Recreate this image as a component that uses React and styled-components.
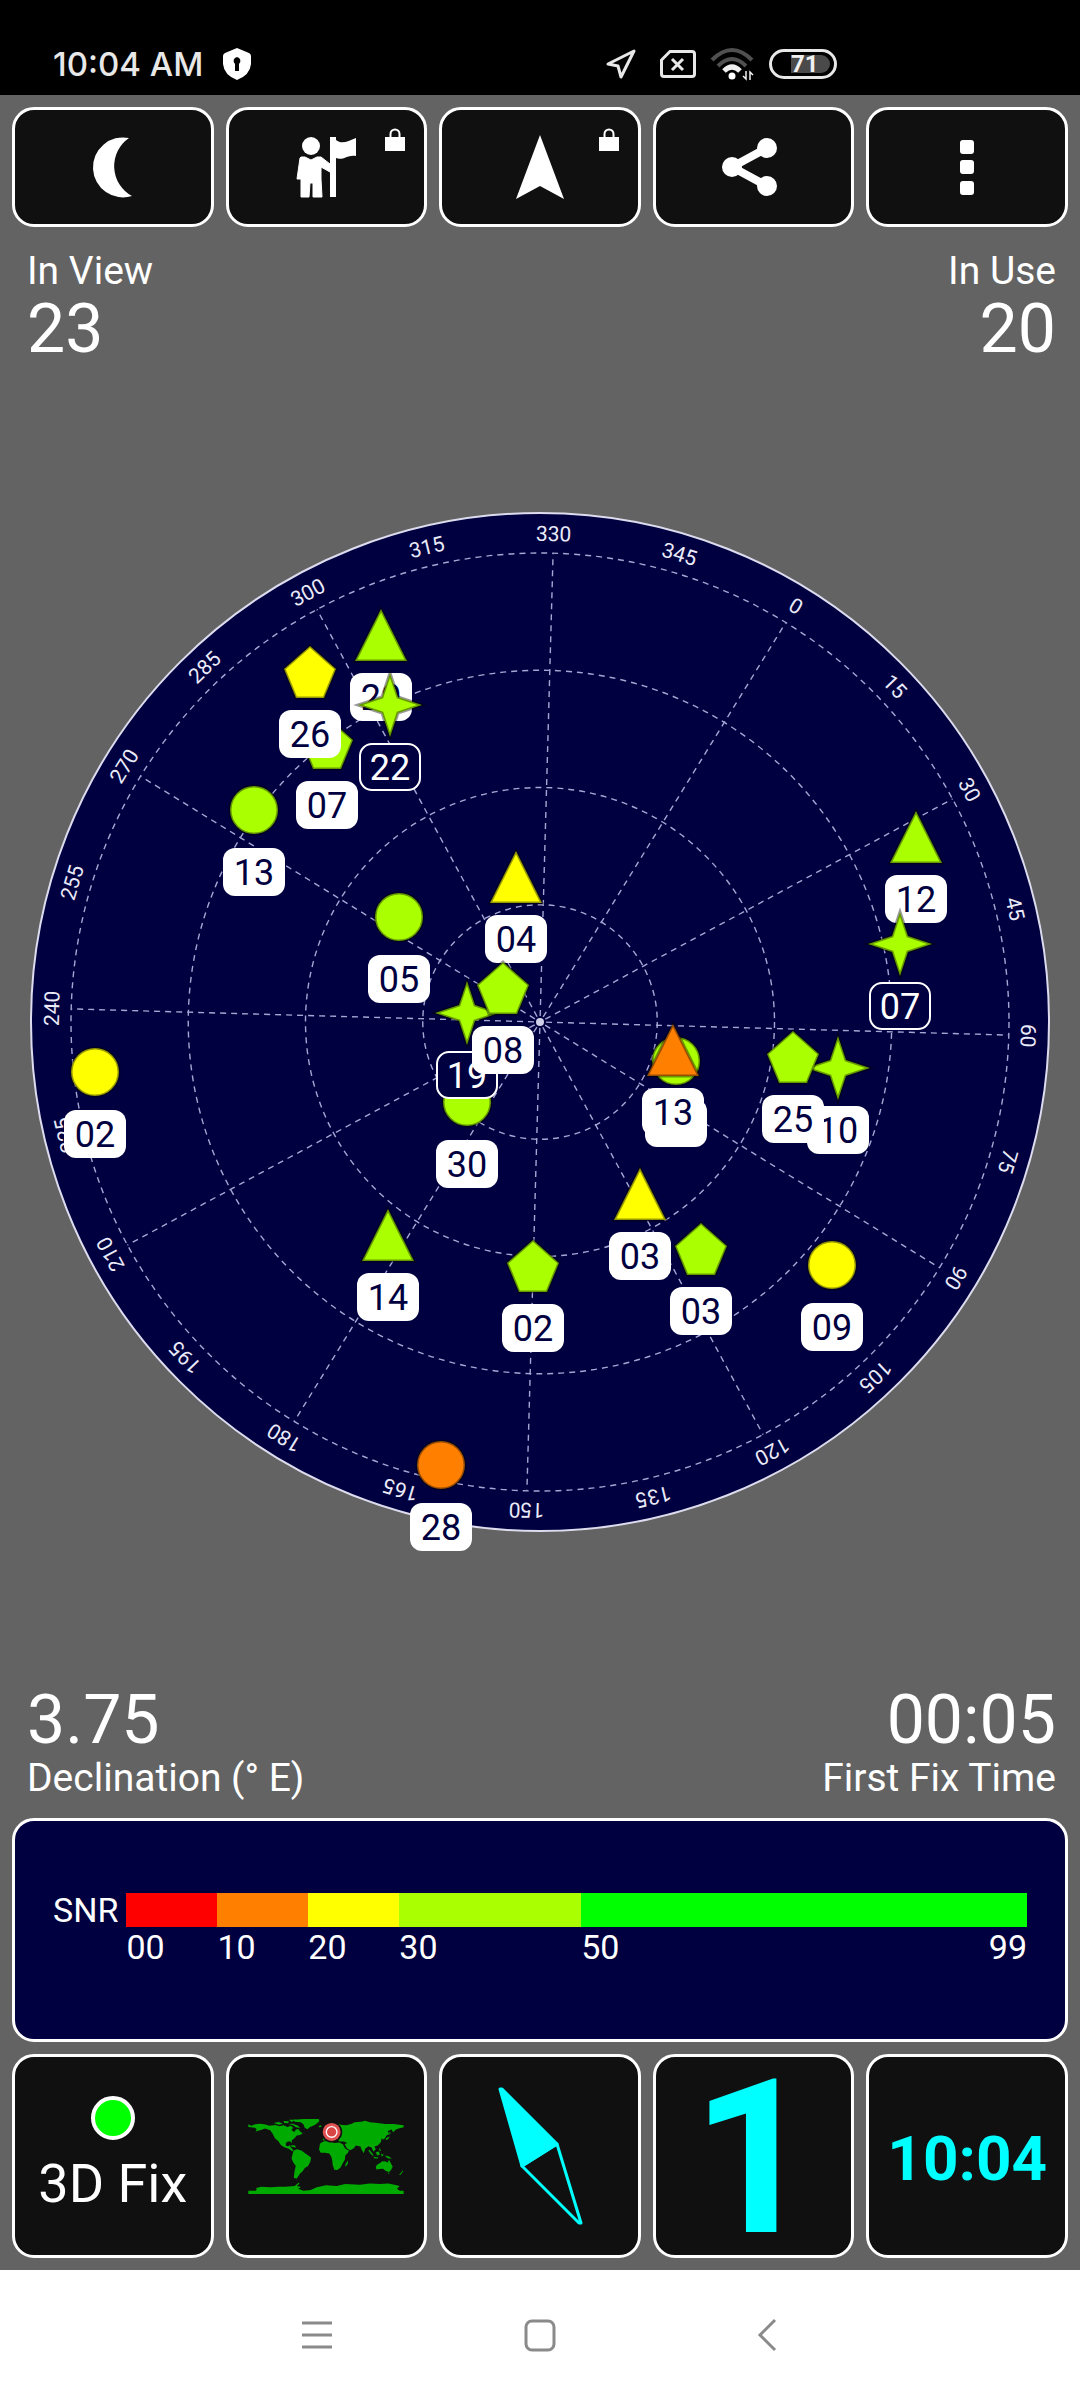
import React from "react";
import styled, { createGlobalStyle } from "styled-components";

const color = {
  page: "#636363",
  tile: "#101010",
  navy: "#000040",
  lime: "#aaff00",
  yellow: "#ffff00",
  orange: "#ff8000",
  red: "#ff0000",
  green: "#00ff00",
  cyan: "#00ffff",
};

const GlobalStyle = createGlobalStyle`
  * { box-sizing: border-box; }
  body {
    margin: 0;
    background: ${color.page};
    color: #fff;
    font-family: Roboto, "Liberation Sans", sans-serif;
  }
  button {
    font: inherit;
    color: inherit;
    margin: 0;
    padding: 0;
    cursor: pointer;
  }
  svg { display: block; overflow: visible; }
`;

const Screen = styled.div`
  display: flex;
  flex-direction: column;
  min-height: 100vh;
`;

const StatusBar = styled.header`
  display: flex;
  align-items: center;
  justify-content: space-between;
  height: 95px;
  padding: 33px 243px 0 53px;
  background: #000;
`;

const StatusGroup = styled.div`
  display: flex;
  align-items: center;
  gap: ${(p) => p.$gap}px;
`;

const Clock = styled.span`
  font-family: Inter, Roboto, sans-serif;
  font-size: 33px;
  line-height: 40px;
  font-weight: 500;
  color: #e8e8e8;
`;

const Battery = styled.div`
  display: flex;
  align-items: center;
  width: 68px;
  height: 30px;
  padding: 0 4px 0 19px;
  border: 3px solid #e8e8e8;
  border-radius: 15px;
`;

const BatteryLevel = styled.span`
  flex: 1;
  height: 18px;
  border-radius: 0 9px 9px 0;
  background: #4a4a4a;
  color: #f0f0f0;
  font-size: 24px;
  line-height: 18px;
  font-weight: 700;
`;

const Main = styled.main`
  flex: 1;
  display: flex;
  flex-direction: column;
  padding: 12px;
`;

const TileRow = styled.div`
  display: grid;
  grid-template-columns: repeat(5, 1fr);
  gap: 12px;
`;

const Tile = styled.button`
  position: relative;
  display: flex;
  flex-direction: column;
  align-items: center;
  justify-content: center;
  gap: 12px;
  height: ${(p) => (p.$tall ? 204 : 120)}px;
  border: 3px solid #fff;
  border-radius: 22px;
  background: ${color.tile};
`;

const LockBadge = styled.span`
  position: absolute;
  top: 18px;
  right: 19px;
`;

const StatRow = styled.section`
  display: flex;
  justify-content: space-between;
  padding: ${(p) => (p.$bottom ? "0 12px 16px 15px" : "20px 12px 0 15px")};
`;

const Stat = styled.div`
  display: flex;
  flex-direction: column;
  text-align: ${(p) => p.$align};
`;

const StatLabel = styled.span`
  font-size: 39px;
  line-height: 48px;
`;

const StatValue = styled.span`
  font-size: 68px;
  line-height: 68px;
`;

const SkyArea = styled.section`
  flex: 1;
  display: flex;
  align-items: center;
  margin: 0 -12px;
  padding-bottom: 6px;
`;

const SkyPlot = styled.svg`
  width: 100%;
  height: auto;
`;

const DegreeText = styled.text`
  font-size: 21px;
  fill: #eaeaf8;
  text-anchor: middle;
`;

const SatText = styled.text`
  font-size: 36px;
  text-anchor: middle;
`;

const Panel = styled.section`
  display: flex;
  align-items: center;
  height: 224px;
  margin-bottom: 12px;
  padding: 0 38px;
  border: 3px solid #fff;
  border-radius: 22px;
  background: ${color.navy};
`;

const Scale = styled.div`
  flex: 1;
  display: grid;
  grid-template-columns: auto 1fr;
  column-gap: 8px;
  font-size: 34px;
`;

const ScaleTitle = styled.span`
  line-height: 34px;
`;

const Bar = styled.div`
  display: flex;
  height: 34px;
`;

const Segment = styled.div`
  flex: ${(p) => p.$span} 0 0;
  background: ${(p) => p.$color};
`;

const Ticks = styled.div`
  grid-column: 2;
  display: flex;
  line-height: 40px;
`;

const Tick = styled.div`
  flex: ${(p) => p.$span} 0 0;
  display: flex;
  justify-content: space-between;
  min-width: 0;
`;

const FixDot = styled.span`
  width: 44px;
  height: 44px;
  border: 4px solid #fff;
  border-radius: 50%;
  background: ${color.green};
`;

const FixText = styled.span`
  font-size: 54px;
  line-height: 64px;
`;

const CyanText = styled.span`
  padding-top: 6px;
  color: ${color.cyan};
  font-weight: 700;
  font-size: ${(p) => p.$size}px;
  line-height: 1;
`;

const NavBar = styled.nav`
  display: flex;
  justify-content: center;
  gap: 124px;
  height: 130px;
  background: #fff;
`;

const NavButton = styled.button`
  display: flex;
  align-items: center;
  justify-content: center;
  width: 100px;
  border: 0;
  background: none;
  color: #8a8a8a;
`;

const ROTATION = 31.6;
const RING = 117.25;

// x and y are measured from the zenith; later entries are painted on top.
const satellites = [
  { id: "20", shape: "triangle", c: color.lime, x: -159, y: -387 },
  { id: "07", shape: "pentagon", c: color.lime, x: -213, y: -279 },
  { id: "26", shape: "pentagon", c: color.yellow, x: -230, y: -350 },
  { id: "22", shape: "star", c: color.lime, x: -150, y: -317, outline: true },
  { id: "13", shape: "circle", c: color.lime, x: -286, y: -212 },
  { id: "05", shape: "circle", c: color.lime, x: -141, y: -105 },
  { id: "04", shape: "triangle", c: color.yellow, x: -24, y: -145 },
  { id: "30", shape: "circle", c: color.lime, x: -73, y: 80 },
  { id: "19", shape: "star", c: color.lime, x: -73, y: -9, outline: true },
  { id: "08", shape: "pentagon", c: color.lime, x: -37, y: -34 },
  { id: "02", shape: "circle", c: color.yellow, x: -445, y: 50 },
  { id: "14", shape: "triangle", c: color.lime, x: -152, y: 213 },
  { id: "02", shape: "pentagon", c: color.lime, x: -7, y: 244 },
  { id: "28", shape: "circle", c: color.orange, x: -99, y: 443 },
  { id: "", shape: "circle", c: color.lime, x: 136, y: 39 },
  { id: "13", shape: "triangle", c: color.orange, x: 133, y: 28 },
  { id: "10", shape: "star", c: color.lime, x: 298, y: 46 },
  { id: "25", shape: "pentagon", c: color.lime, x: 253, y: 35 },
  { id: "03", shape: "triangle", c: color.yellow, x: 100, y: 172 },
  { id: "03", shape: "pentagon", c: color.lime, x: 161, y: 227 },
  { id: "09", shape: "circle", c: color.yellow, x: 292, y: 243 },
  { id: "12", shape: "triangle", c: color.lime, x: 376, y: -185 },
  { id: "07", shape: "star", c: color.lime, x: 360, y: -78, outline: true },
];

const shapes = {
  triangle: <polygon points="0,-26 26,26 -26,26" />,
  pentagon: <polygon points="0,-26 26,-3 14,26 -14,26 -26,-3" />,
  star: <polygon points="0,-32 8,-8 32,0 8,8 0,32 -8,8 -32,0 -8,-8" />,
  circle: <circle r="24" />,
};

function Satellite({ sat }) {
  return (
    <g transform={`translate(${sat.x} ${sat.y})`}>
      <g fill={sat.c} stroke="#000" strokeOpacity="0.4" strokeWidth="3">
        {shapes[sat.shape]}
      </g>
      <g transform="translate(0 61)">
        <rect
          x={sat.outline ? -30 : -31}
          y={sat.outline ? -22 : -23}
          width={sat.outline ? 60 : 62}
          height={sat.outline ? 46 : 48}
          rx="12"
          fill={sat.outline ? color.navy : "#fff"}
          stroke={sat.outline ? "#fff" : "none"}
          strokeWidth="2"
        />
        {sat.id && (
          <SatText y="14" fill={sat.outline ? "#fff" : color.navy}>
            {sat.id}
          </SatText>
        )}
      </g>
    </g>
  );
}

function SkyView() {
  const degrees = Array.from({ length: 24 }, (_, i) => i * 15);
  return (
    <SkyPlot viewBox="-540 -540 1080 1080" role="img" aria-label="Satellite positions">
      <circle r="509" fill={color.navy} stroke="#dcdcee" strokeWidth="2" />
      <g fill="none" stroke="#a6a6d4" strokeWidth="1.4" strokeDasharray="6 5">
        {[1, 2, 3, 4].map((n) => (
          <circle key={n} r={RING * n} />
        ))}
        {degrees
          .filter((d) => d % 30 === 0)
          .map((d) => (
            <line key={d} y1="-6" y2={-RING * 4} transform={`rotate(${d + ROTATION})`} />
          ))}
      </g>
      <circle r="4" fill="#d0d0e8" />
      {degrees.map((d) => (
        <DegreeText key={d} y="-481" transform={`rotate(${d + ROTATION})`}>
          {d}
        </DegreeText>
      ))}
      {satellites.map((sat, i) => (
        <Satellite key={i} sat={sat} />
      ))}
    </SkyPlot>
  );
}

const snrScale = [
  { from: "00", span: 10, c: color.red },
  { from: "10", span: 10, c: color.orange },
  { from: "20", span: 10, c: color.yellow },
  { from: "30", span: 20, c: color.lime },
  { from: "50", span: 49, c: color.green, to: "99" },
];

const Icon = ({ children, w = 60, h = 60, box }) => (
  <svg width={w} height={h} viewBox={box || `0 0 ${w} ${h}`} fill="currentColor" aria-hidden="true">
    {children}
  </svg>
);

const MoonIcon = () => (
  <Icon>
    <path d="M46 1A30 30 0 1 0 49 59A34 34 0 0 1 46 1Z" />
  </Icon>
);

const GuideIcon = () => (
  <Icon>
    <circle cx="15" cy="9" r="9" />
    <path
      d="M5 20L9 20L15 23L21 20L25 20L34 27L34 35L25 30V42L26 60H17V46H14L13 60H5V42H1L4 21Z"
      stroke="currentColor"
      strokeWidth="1"
      strokeLinejoin="round"
    />
    <path d="M34 0H40V60H34Z" />
    <path d="M40 3C46 8 52 4 60 1V19C52 17 47 24 40 21Z" />
  </Icon>
);

const ArrowIcon = () => (
  <Icon w={60} h={64}>
    <path d="M30 0L54 64L30 51L6 64Z" />
  </Icon>
);

const ShareIcon = () => (
  <Icon>
    <path d="M43 11L8 30L43 49" fill="none" stroke="currentColor" strokeWidth="8" />
    <circle cx="8" cy="30" r="10" />
    <circle cx="43" cy="11" r="10" />
    <circle cx="43" cy="49" r="10" />
  </Icon>
);

const MoreIcon = () => (
  <Icon>
    <rect x="23" y="3" width="14" height="14" rx="3" />
    <rect x="23" y="23" width="14" height="14" rx="3" />
    <rect x="23" y="44" width="14" height="14" rx="3" />
  </Icon>
);

const Lock = () => (
  <LockBadge>
    <Icon w={20} h={23}>
      <rect y="9" width="20" height="14" />
      <path d="M5.500 10V6A4.500 4.500 0 0 1 14.500 6V10" fill="none" stroke="currentColor" strokeWidth="2" />
    </Icon>
  </LockBadge>
);

const WorldMap = () => (
  <svg width="156" height="75" viewBox="84 60 468 226" fill="#00aa00" aria-hidden="true">
    <path d="M84 76L92 80L105 76L118 74L132 76L148 80L165 78L178 82L190 79L202 84L212 80L219 86L214 93L222 99L228 92L235 90L240 98L248 103L240 108L230 110L223 118L215 124L215 133L211 128L203 128L197 132L197 140L204 143L208 138L212 146L220 154L216 157L206 150L192 145L182 138L174 126L164 118L158 106L150 94L134 89L122 93L106 98L109 91L104 86L84 84Z" />
    <path d="M160 72L176 69L188 74L176 77ZM190 66L206 67L204 73L192 72ZM206 62L228 62L214 69ZM204 75L218 74L234 80L240 88L226 84L218 78ZM210 140L224 139L228 146L216 144Z" />
    <path d="M220 62L250 60L296 60L298 66L292 72L284 78L270 84L262 91L254 86L250 76L242 70L224 68Z" />
    <path d="M220 156L230 151L244 155L256 164L273 176L271 188L264 202L254 208L247 218L240 224L232 236L229 240L221 237L223 218L227 202L219 190L214 178L217 168Z" />
    <path d="M300 134L312 127L328 126L344 132L358 131L369 136L375 148L384 154L388 152L384 162L376 170L375 182L368 194L362 206L352 214L343 213L338 198L337 186L334 174L328 164L314 162L302 162L297 152Z" />
    <path d="M376 198L380 190L384 185L384 194L380 200L376 203ZM296 81L304 79L304 84L297 85ZM310 102L316 96L320 108L311 110Z" />
    <path d="M308 124L310 115L320 111L328 104L338 108L346 94L340 84L352 74L366 78L380 79L396 74L404 70L424 68L436 65L450 70L474 72L496 75L522 75L552 79L552 85L540 88L530 91L520 100L516 92L504 96L508 106L500 110L496 118L490 122L486 118L483 130L474 140L464 143L468 152L461 158L455 146L446 142L436 150L432 163L425 152L422 143L408 140L402 148L391 154L381 148L374 136L382 132L372 128L358 128L352 120L340 122L332 116L318 125Z" />
    <path d="M448 152L458 164L462 172L454 167L446 156ZM468 160L478 158L480 168L472 170ZM462 174L476 176L474 179L462 178ZM484 164L492 168L486 174ZM478 146L484 154L480 157ZM494 170L508 173L516 180L504 178ZM499 118L510 112L506 120L498 124ZM508 98L513 102L510 108Z" />
    <path d="M468 204L472 198L482 192L488 187L498 188L504 191L508 183L514 194L519 204L514 214L508 220L498 217L490 210L480 211L470 212ZM504 222L510 222L507 226ZM538 228L544 222L550 214L549 220L542 229Z" />
    <path d="M84 286V276H106L110 271L106 269L122 264L150 266L176 264L196 264L224 262L236 251L238 255L230 262L243 265L234 270L250 276L272 274L290 266L318 260L350 262L376 256L420 258L450 254L480 256L506 254L524 258L540 262L532 270L540 276H552V286Z" />
    <circle cx="335" cy="99" r="32" fill="#101010" />
    <circle cx="335" cy="99" r="27" fill="#e05252" />
    <circle cx="335" cy="99" r="16" fill="#d94444" stroke="#fff" strokeWidth="4" />
  </svg>
);

const CompassNeedle = () => (
  <svg width="86" height="140" viewBox="-43 -70 86 140" aria-hidden="true">
    <g stroke={color.cyan} strokeWidth="3" strokeLinejoin="round">
      <path d="M-40 -67L-18 10L17 -12L-38 -67Z" fill={color.cyan} />
      <path d="M-18 10L39 67H41L17 -12Z" fill="none" />
    </g>
  </svg>
);

const ShieldIcon = () => (
  <Icon w={28} h={32}>
    <path fillRule="evenodd" d="M14 0L26 5Q28 6 28 8V16Q27 27 14 32Q1 27 0 16V8Q0 6 2 5ZM14 9A4 4 0 0 0 12 16V23H16V16A4 4 0 0 0 14 9Z" />
  </Icon>
);

export default function App() {
  return (
    <>
      <GlobalStyle />
      <Screen>
        <StatusBar>
          <StatusGroup $gap={20}>
            <Clock>10:04 AM</Clock>
            <ShieldIcon />
          </StatusGroup>
          <StatusGroup $gap={15}>
            <Icon w={40} h={32}>
              <path d="M29 3L16 29L13 18L3 16Z" fill="none" stroke="#e8e8e8" strokeWidth="3" strokeLinejoin="round" />
            </Icon>
            <Icon w={36} h={28}>
              <g fill="none" stroke="#e8e8e8" strokeWidth="3">
                <path d="M10 1.500H32Q34.500 1.500 34.500 4V24Q34.500 26.500 32 26.500H4Q1.500 26.500 1.500 24V10Z" />
                <path d="M12 9L23 20M23 9L12 20" />
              </g>
            </Icon>
            <Icon w={43} h={33}>
              <g fill="none" strokeWidth="4">
                <path d="M1 12Q21 -8 41 12" stroke="#505050" />
                <path d="M7 18Q21 4 35 18" stroke="#505050" />
                <path d="M13 23Q21 15 29 23" stroke="#f0f0f0" strokeWidth="5" />
              </g>
              <circle cx="21" cy="28" r="3.500" />
              <path d="M35 23V31L32 28M39 32V24L42 27" fill="none" stroke="#f0f0f0" strokeWidth="1.500" />
            </Icon>
            <Battery>
              <BatteryLevel>71</BatteryLevel>
            </Battery>
          </StatusGroup>
        </StatusBar>

        <Main>
          <TileRow>
            <Tile aria-label="Night mode"><MoonIcon /></Tile>
            <Tile aria-label="Guide"><GuideIcon /><Lock /></Tile>
            <Tile aria-label="Navigate"><ArrowIcon /><Lock /></Tile>
            <Tile aria-label="Share"><ShareIcon /></Tile>
            <Tile aria-label="More options"><MoreIcon /></Tile>
          </TileRow>

          <StatRow>
            <Stat $align="left">
              <StatLabel>In View</StatLabel>
              <StatValue>23</StatValue>
            </Stat>
            <Stat $align="right">
              <StatLabel>In Use</StatLabel>
              <StatValue>20</StatValue>
            </Stat>
          </StatRow>

          <SkyArea>
            <SkyView />
          </SkyArea>

          <StatRow $bottom>
            <Stat $align="left">
              <StatValue>3.75</StatValue>
              <StatLabel>Declination (° E)</StatLabel>
            </Stat>
            <Stat $align="right">
              <StatValue>00:05</StatValue>
              <StatLabel>First Fix Time</StatLabel>
            </Stat>
          </StatRow>

          <Panel>
            <Scale>
              <ScaleTitle>SNR</ScaleTitle>
              <Bar>
                {snrScale.map((s) => (
                  <Segment key={s.from} $span={s.span} $color={s.c} />
                ))}
              </Bar>
              <Ticks>
                {snrScale.map((s) => (
                  <Tick key={s.from} $span={s.span}>
                    <span>{s.from}</span>
                    {s.to && <span>{s.to}</span>}
                  </Tick>
                ))}
              </Ticks>
            </Scale>
          </Panel>

          <TileRow>
            <Tile $tall>
              <FixDot />
              <FixText>3D Fix</FixText>
            </Tile>
            <Tile $tall aria-label="World map"><WorldMap /></Tile>
            <Tile $tall aria-label="Compass"><CompassNeedle /></Tile>
            <Tile $tall><CyanText $size={216}>1</CyanText></Tile>
            <Tile $tall><CyanText $size={62}>10:04</CyanText></Tile>
          </TileRow>
        </Main>

        <NavBar>
          <NavButton aria-label="Recent apps">
            <Icon w={32} h={32}>
              <path d="M2 4H32M2 16H32M2 28H32" stroke="currentColor" strokeWidth="3" />
            </Icon>
          </NavButton>
          <NavButton aria-label="Home">
            <Icon w={32} h={32}>
              <rect x="2" y="2" width="28" height="29" rx="6" fill="none" stroke="currentColor" strokeWidth="3" />
            </Icon>
          </NavButton>
          <NavButton aria-label="Back">
            <Icon w={32} h={32}>
              <path d="M27 1L12 16L27 31" fill="none" stroke="currentColor" strokeWidth="3" />
            </Icon>
          </NavButton>
        </NavBar>
      </Screen>
    </>
  );
}
